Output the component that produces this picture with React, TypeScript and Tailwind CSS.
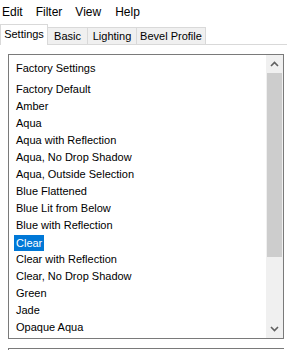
import React from "react";

const items = [
  "Factory Default",
  "Amber",
  "Aqua",
  "Aqua with Reflection",
  "Aqua, No Drop Shadow",
  "Aqua, Outside Selection",
  "Blue Flattened",
  "Blue Lit from Below",
  "Blue with Reflection",
  "Clear",
  "Clear with Reflection",
  "Clear, No Drop Shadow",
  "Green",
  "Jade",
  "Opaque Aqua",
];

function Chevron({ up }: { up?: boolean }) {
  return (
    <svg width="9" height="6" viewBox="0 0 9 6">
      <path
        d={up ? "M1 5 L4.5 1.5 L8 5" : "M1 1 L4.5 4.5 L8 1"}
        fill="none"
        stroke="#606060"
        strokeWidth="1.6"
      />
    </svg>
  );
}

export default function App() {
  return (
    <div
      className="w-[287px] h-[350px] bg-white overflow-hidden text-[11px] text-black relative"
      style={{ fontFamily: '"Liberation Sans", Arial, sans-serif' }}
    >
      {/* Menu bar */}
      <div className="h-[24px] flex items-start pt-[4px] leading-[16px] text-[12px]">
        <span className="ml-[2px]">Edit</span>
        <span className="ml-[13px]">Filter</span>
        <span className="ml-[13px]">View</span>
        <span className="ml-[14px]">Help</span>
      </div>
      {/* Tabs */}
      <div className="h-[21px] flex items-end border-b border-[#d9d9d9]">
        <div className="h-[21px] w-[48px] bg-white border border-b-0 border-[#d9d9d9] flex items-center justify-center -mb-px relative z-10 pb-[2px]">
          Settings
        </div>
        <div className="h-[17px] w-[40px] bg-[#f0f0f0] border border-l-0 border-b-0 border-[#d9d9d9] flex items-center justify-center">
          Basic
        </div>
        <div className="h-[17px] w-[49px] bg-[#f0f0f0] border border-l-0 border-b-0 border-[#d9d9d9] flex items-center justify-center">
          Lighting
        </div>
        <div className="h-[17px] w-[69px] bg-[#f0f0f0] border border-l-0 border-b-0 border-[#d9d9d9] flex items-center justify-center">
          Bevel Profile
        </div>
      </div>
      {/* Content */}
      <div className="pl-[8px] pr-[3px] pt-[9px]">
        <div className="h-[285px] border border-[#7a7a7a] flex">
          <div className="flex-1 pt-[5px] pl-[5px]">
            <div className="h-[17px] leading-[17px] pl-[2px]">Factory Settings</div>
            <div className="mt-[4px] flex flex-col">
              {items.map((it) => (
                <div key={it} className="h-[17px] flex items-center">
                  {it === "Clear" ? (
                    <span className="h-[16px] leading-[16px] px-[2px] bg-[#0078d7] text-white">
                      {it}
                    </span>
                  ) : (
                    <span className="px-[2px]">{it}</span>
                  )}
                </div>
              ))}
            </div>
          </div>
          <div className="w-[17px] bg-[#f0f0f0] flex flex-col">
            <div className="h-[18px] flex items-center justify-center">
              <Chevron up />
            </div>
            <div className="h-[184px] mx-[1px] bg-[#cdcdcd]" />
            <div className="flex-1" />
            <div className="h-[18px] flex items-center justify-center">
              <Chevron />
            </div>
          </div>
        </div>
        <div className="mt-[9px] h-[20px] border-t border-l border-[#7a7a7a]" />
      </div>
    </div>
  );
}
